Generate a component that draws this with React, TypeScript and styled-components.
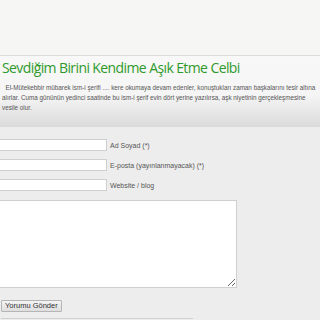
import styled, { createGlobalStyle } from 'styled-components';

const GlobalStyle = createGlobalStyle`
  body {
    margin: 0;
    background: #ededed;
    font-family: 'Liberation Sans', Arial, sans-serif;
    overflow: hidden;
  }
`;

type FieldPropsType = {
  label: string;
};

const Field = ({ label }: FieldPropsType) => {
  return (
    <FieldRow>
      <Input type="text" />
      <Label>{label}</Label>
    </FieldRow>
  );
};

const App = () => {
  return (
    <Page>
      <GlobalStyle />
      <Header />
      <Post>
        <Title>Sevdiğim Birini Kendime Aşık Etme Celbi</Title>
        <Text>
          &nbsp;&nbsp;El-Mütekebbir mübarek ism-i şerifi .... kere okumaya devam edenler, konuştukları zaman başkalarını tesir altına
          <br />
          alırlar. Cuma gününün yedinci saatinde bu ism-i şerif evin dört yerine yazılırsa, aşk niyetinin gerçekleşmesine
          <br />
          vesile olur.
        </Text>
      </Post>
      <Form>
        <Field label="Ad Soyad (*)" />
        <Field label="E-posta (yayınlanmayacak) (*)" />
        <Field label="Website / blog" />
        <TextArea />
        <Button type="button">Yorumu Gönder</Button>
        <Footer />
      </Form>
    </Page>
  );
};

const Page = styled.div`
  width: 320px;
  height: 320px;
  overflow: hidden;
`;

const Header = styled.div`
  height: 55px;
  background: #f6f6f5;
  border-bottom: 1px solid #dcdcdc;
`;

const Post = styled.div`
  height: 71px;
  box-sizing: border-box;
  padding: 2px 2px 0 2px;
  background: linear-gradient(#f8f8f8 0%, #f5f5f5 55%, #dadada 100%);
`;

const Title = styled.h2`
  margin: 0;
  font-family: 'Open Sans', sans-serif;
  font-weight: 400;
  font-size: 14px;
  letter-spacing: -0.6px;
  line-height: 20px;
  color: #2f9a2c;
  white-space: nowrap;
`;

const Text = styled.p`
  margin: 5px 0 0 0;
  font-size: 6.3px;
  line-height: 10px;
  color: #555;
  white-space: nowrap;
`;

const Form = styled.div`
  padding: 12px 0 0 1px;
  display: flex;
  flex-direction: column;
  align-items: flex-start;
`;

const FieldRow = styled.div`
  display: flex;
  align-items: center;
  gap: 3px;
  margin-bottom: 8px;
  margin-left: -11px;
`;

const Input = styled.input`
  box-sizing: border-box;
  width: 117px;
  height: 12px;
  margin: 0;
  padding: 0;
  background: #fff;
  border: 1px solid #cfcfcf;
`;

const Label = styled.span`
  font-size: 7px;
  color: #555;
`;

const TextArea = styled.textarea`
  box-sizing: border-box;
  width: 247px;
  height: 88px;
  margin: 1px 0 0 -11px;
  padding: 0;
  background: #fff;
  border: 1px solid #cfcfcf;
  resize: both;
`;

const Button = styled.button`
  box-sizing: border-box;
  height: 12px;
  margin-top: 12px;
  padding: 0 3px;
  font-family: 'Liberation Sans', Arial, sans-serif;
  font-size: 7.5px;
  line-height: 10px;
  color: #333;
  background: linear-gradient(#f4f4f4, #dedede);
  border: 1px solid #b5b5b5;
  border-radius: 1px;
`;

const Footer = styled.div`
  width: 192px;
  margin-top: 6px;
  border-top: 1px solid #d0d0d0;
`;

export default App;
